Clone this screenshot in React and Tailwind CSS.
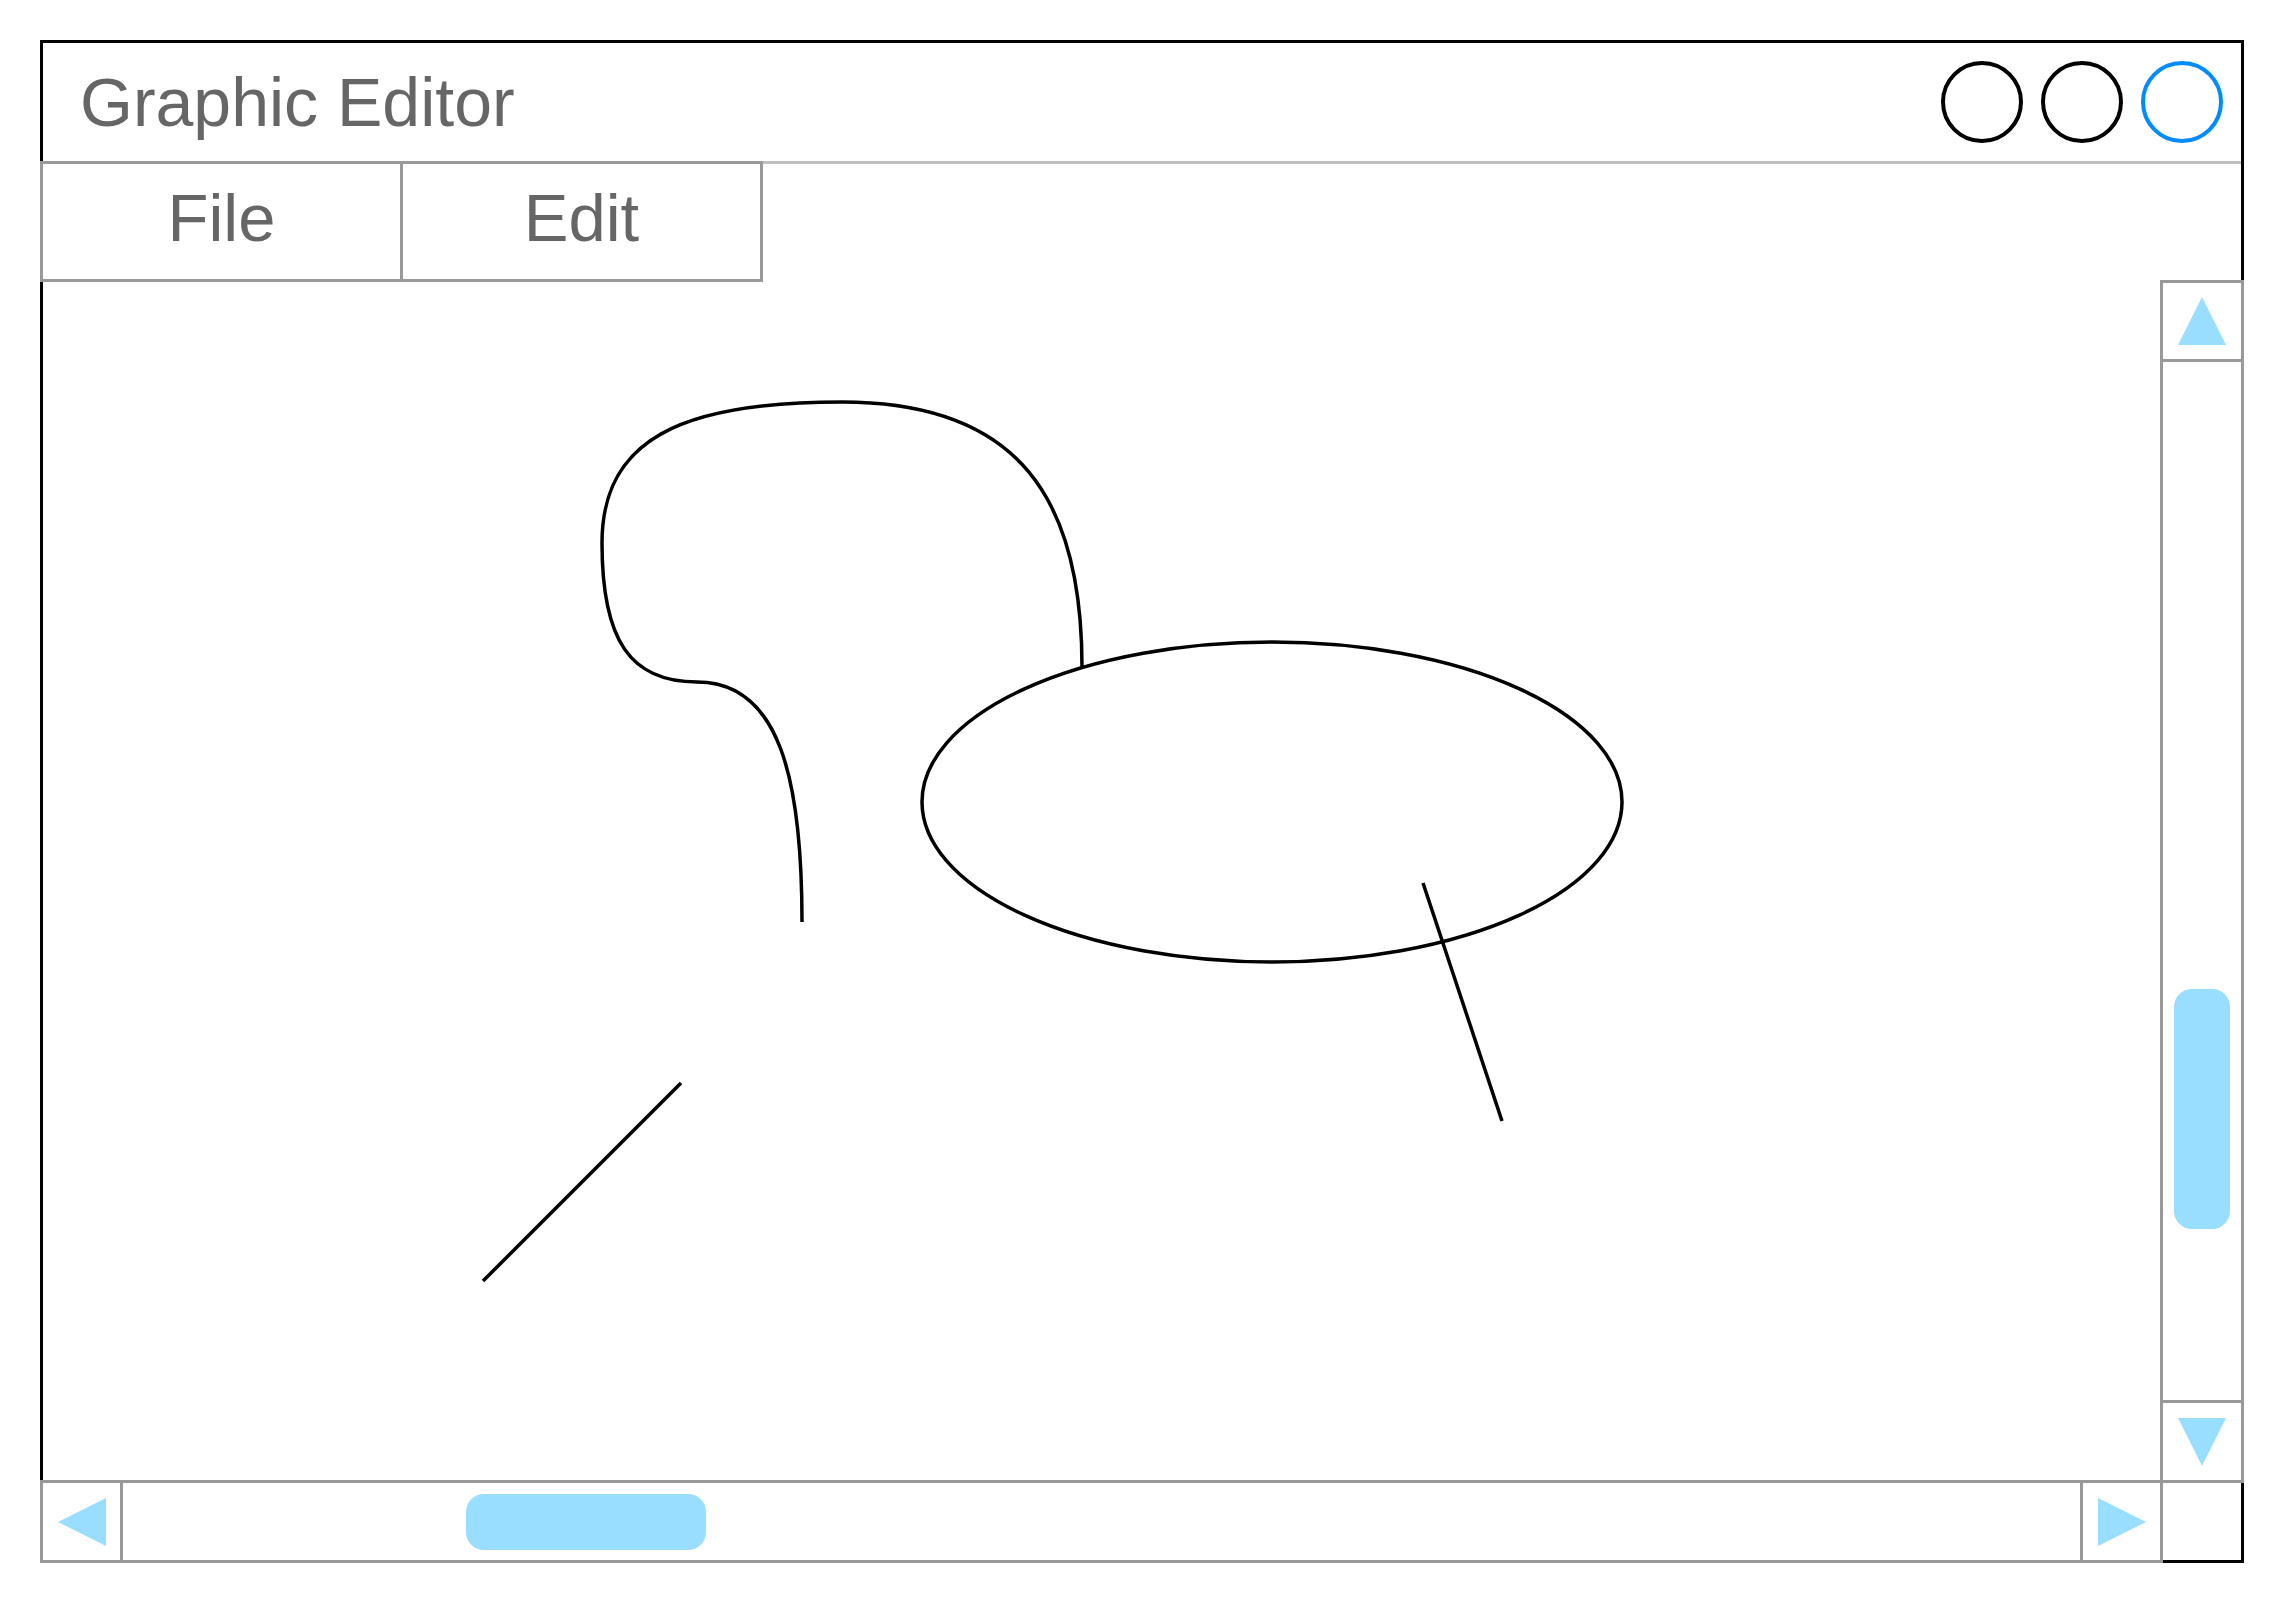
import React from "react";

const font = { fontFamily: '"Liberation Sans", Arial, Helvetica, sans-serif' };

function Tri({ dir }) {
  const pts = {
    up: "24,0 48,48 0,48",
    down: "0,0 48,0 24,48",
    left: "48,0 48,48 0,24",
    right: "0,0 48,24 0,48",
  }[dir];
  return (
    <svg width="48" height="48" viewBox="0 0 48 48" className="block">
      <polygon points={pts} fill="#99ddff" />
    </svg>
  );
}

export default function App() {
  return (
    <div className="w-[2284px] h-[1604px] bg-white pt-[40px] pl-[40px]" style={font}>
      <div className="w-[2204px] h-[1523px] border-[3px] border-black flex flex-col">
        {/* Title bar */}
        <div className="h-[121px] shrink-0 border-b-[3px] border-[#c0c0c0] flex items-center justify-between pl-[37px] pr-[18px]">
          <div className="text-[68px] leading-none text-[#666666]">Graphic Editor</div>
          <div className="flex gap-[18px]">
            <div className="w-[82px] h-[82px] rounded-full border-[4px] border-black" />
            <div className="w-[82px] h-[82px] rounded-full border-[4px] border-black" />
            <div className="w-[82px] h-[82px] rounded-full border-[4px] border-[#008cff]" />
          </div>
        </div>
        {/* Menu */}
        <div className="flex h-[121px] shrink-0 -mt-[3px] -ml-[3px]">
          <div className="w-[363px] h-full border-[3px] border-[#999999] flex items-center justify-center pb-[8px] text-[67px] leading-none text-[#666666]">
            File
          </div>
          <div className="w-[363px] h-full -ml-[3px] border-[3px] border-[#999999] flex items-center justify-center pb-[8px] text-[67px] leading-none text-[#666666]">
            Edit
          </div>
        </div>
        {/* Middle */}
        <div className="flex h-[1201px] shrink-0">
          <div className="flex-1 relative">
            <svg width="2117" height="1201" viewBox="43 282 2117 1201" className="block">
              <g fill="none" stroke="#000" strokeWidth="3.5">
                <path d="M 1082 667 C 1082 500 1020 402 842 402 C 680 402 602 440 602 543 C 602 640 630 682 697 682 C 780 682 802 780 802 922" />
                <ellipse cx="1272" cy="802" rx="350" ry="160" fill="#fff" />
                <line x1="681" y1="1083" x2="483" y2="1281" />
                <line x1="1423" y1="883" x2="1502" y2="1121" />
              </g>
            </svg>
          </div>
          <div className="w-[84px] shrink-0 -mr-[3px] -mt-[2px] h-[1203px] border-[3px] border-[#999999] flex flex-col">
            <div className="h-[79px] shrink-0 border-b-[3px] border-[#999999] flex items-center justify-center">
              <Tri dir="up" />
            </div>
            <div className="flex-1 relative">
              <div className="ml-[11px] mt-[627px] w-[56px] h-[240px] rounded-[18px] bg-[#99ddff]" />
            </div>
            <div className="h-[80px] shrink-0 border-t-[3px] border-[#999999] flex items-center justify-center">
              <Tri dir="down" />
            </div>
          </div>
        </div>
        {/* Bottom */}
        <div className="flex h-[83px] shrink-0 -mt-[3px]">
          <div className="w-[2123px] h-full -ml-[3px] border-[3px] border-[#999999] flex">
            <div className="w-[80px] shrink-0 border-r-[3px] border-[#999999] flex items-center justify-center">
              <Tri dir="left" />
            </div>
            <div className="flex-1 flex items-center">
              <div className="ml-[343px] w-[240px] h-[56px] rounded-[18px] bg-[#99ddff]" />
            </div>
            <div className="w-[80px] shrink-0 border-l-[3px] border-[#999999] flex items-center justify-center">
              <Tri dir="right" />
            </div>
          </div>
        </div>
      </div>
    </div>
  );
}
